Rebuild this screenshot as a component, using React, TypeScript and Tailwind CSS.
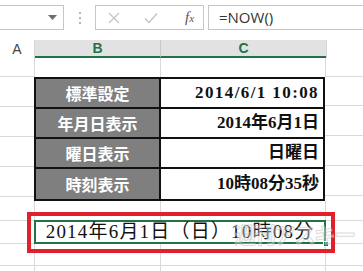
const rows = [
  { label: "標準設定", value: "2014/6/1 10:08", wide: true },
  { label: "年月日表示", value: "2014年6月1日", wide: false },
  { label: "曜日表示", value: "日曜日", wide: false },
  { label: "時刻表示", value: "10時08分35秒", wide: false },
];

const serif = { fontFamily: '"Liberation Serif", "Noto Sans CJK JP", serif' };

export default function App() {
  return (
    <div className="w-[363px] h-[271px] overflow-hidden bg-white relative" style={{ fontFamily: '"Liberation Sans", "Noto Sans CJK JP", sans-serif' }}>
      {/* Formula bar */}
      <div className="h-[40px] flex items-start pt-[5px]">
        <div className="w-[64px] h-[25px] border border-[#c6c6c6] border-l-0 flex items-center justify-end pr-[6px]">
          <svg width="9" height="5" viewBox="0 0 9 5">
            <path d="M0 0h9L4.5 5z" fill="#6d6d6d" />
          </svg>
        </div>
        <div className="w-[31px] h-[25px] flex flex-col items-center justify-center gap-[3px]">
          <span className="w-[2px] h-[2px] bg-[#b5b5b5]" />
          <span className="w-[2px] h-[2px] bg-[#b5b5b5]" />
          <span className="w-[2px] h-[2px] bg-[#b5b5b5]" />
        </div>
        <div className="w-[109px] h-[25px] border border-[#c6c6c6] flex items-center">
          <svg className="ml-[12px]" width="12" height="12" viewBox="0 0 12 12">
            <path d="M1 1L11 11M11 1L1 11" stroke="#c4c4c4" strokeWidth="1.3" fill="none" />
          </svg>
          <svg className="ml-[24px]" width="14" height="12" viewBox="0 0 14 12">
            <path d="M1 6.5L5 10.5L13 1.5" stroke="#c4c4c4" strokeWidth="1.5" fill="none" />
          </svg>
          <span className="ml-[27px] text-[#555] italic text-[15px] leading-none" style={{ fontFamily: '"Liberation Serif", serif' }}>
            f<span className="text-[11px]">x</span>
          </span>
        </div>
        <div className="ml-[4px] flex-1 h-[25px] border border-[#c6c6c6] border-r-0 flex items-center pl-[10px] text-[15px] text-[#333]" style={{ fontFamily: '"Open Sans", sans-serif' }}>
          =NOW()
        </div>
      </div>

      {/* Column headers */}
      <div className="flex h-[18px]">
        <div className="w-[35px] border-r border-[#d4d4d4] flex items-center justify-center text-[14px] text-[#444]">A</div>
        <div className="w-[126px] bg-[#e2e2e2] border-r border-[#c8c8c8] border-b-2 border-b-[#217346] flex items-center justify-center text-[14px] font-bold text-[#217346]">B</div>
        <div className="w-[165px] bg-[#e2e2e2] border-b-2 border-b-[#217346] flex items-center justify-center text-[14px] font-bold text-[#217346]">C</div>
        <div className="flex-1 border-l border-[#d4d4d4]" />
      </div>

      {/* Empty row */}
      <div className="flex h-[19px]">
        <div className="w-[35px] border-r border-b border-[#d9d9d9]" />
        <div className="w-[126px] border-r border-[#d9d9d9]" />
        <div className="w-[165px] border-r border-[#d9d9d9]" />
        <div className="flex-1 border-b border-[#d9d9d9]" />
      </div>

      {/* Table */}
      <div className="flex">
        <div className="w-[35px] flex flex-col">
          {rows.map((r) => (
            <div key={r.label} className="h-[30px] border-r border-b border-[#d9d9d9]" />
          ))}
        </div>
        <div className="w-[291px] -ml-px border-2 border-[#111] flex flex-col">
          {rows.map((r, i) => (
            <div key={r.label} className={`flex h-[30px] ${i < rows.length - 1 ? "border-b-2 border-[#111]" : ""}`}>
              <div className="w-[125px] bg-[#7f7f7f] border-r-2 border-[#111] flex items-center justify-center text-white font-bold text-[16px]" style={{ fontFamily: '"Noto Sans CJK JP", sans-serif' }}>
                {r.label}
              </div>
              <div className={`flex-1 flex items-center justify-end pr-[4px] font-bold text-[17px] text-[#111] ${r.wide ? "tracking-[1.4px]" : ""}`} style={serif}>
                {r.value}
              </div>
            </div>
          ))}
        </div>
        <div className="flex-1 flex flex-col -mt-px">
          {rows.map((r) => (
            <div key={r.label} className="h-[30px] border-b border-[#d9d9d9]" />
          ))}
        </div>
      </div>

      {/* Row after table */}
      <div className="flex h-[20px]">
        <div className="w-[35px] border-r border-b border-[#d9d9d9]" />
        <div className="w-[126px] border-r border-[#d9d9d9]" />
        <div className="w-[165px] border-r border-b border-[#d9d9d9]" />
        <div className="flex-1 border-b border-[#d9d9d9]" />
      </div>

      {/* Selected merged cell */}
      <div className="flex h-[23px]">
        <div className="w-[35px] border-r border-b border-[#d9d9d9]" />
        <div className="w-[291px] relative">
          <div className="absolute -left-[8px] -top-[9px] -right-[9px] -bottom-[9px] border-[4px] border-[#e0202a]" />
          <div className="absolute -left-px -top-px right-0 bottom-0 border-2 border-[#217346] flex items-center justify-center text-[19px] tracking-[1.2px] text-[#111]" style={serif}>
            2014年6月1日（日）10時08分
          </div>
          <div className="absolute -right-[3px] -bottom-[3px] w-[6px] h-[6px] bg-[#217346] border border-white" />
        </div>
        <div className="flex-1 border-b border-[#d9d9d9]" />
      </div>

      {/* Rows below */}
      <div className="flex h-[22px]">
        <div className="w-[35px] border-r border-b border-[#d9d9d9]" />
        <div className="w-[126px] border-r border-b border-[#d9d9d9]" />
        <div className="w-[165px] border-r border-b border-[#d9d9d9]" />
        <div className="flex-1 border-b border-[#d9d9d9]" />
      </div>
      <div className="flex h-[30px]">
        <div className="w-[35px] border-r border-[#d9d9d9]" />
        <div className="w-[126px] border-r border-[#d9d9d9]" />
        <div className="w-[165px] border-r border-[#d9d9d9]" />
      </div>

      {/* Watermark */}
      <div className="absolute left-[234px] top-[222px] text-[22px] leading-none font-bold text-white/40 tracking-[-2px] pointer-events-none" style={{ WebkitTextStroke: "1px rgba(160,160,160,0.4)", fontFamily: '"Noto Sans CJK JP", sans-serif' }}>
        週刊アスキー
      </div>
    </div>
  );
}
